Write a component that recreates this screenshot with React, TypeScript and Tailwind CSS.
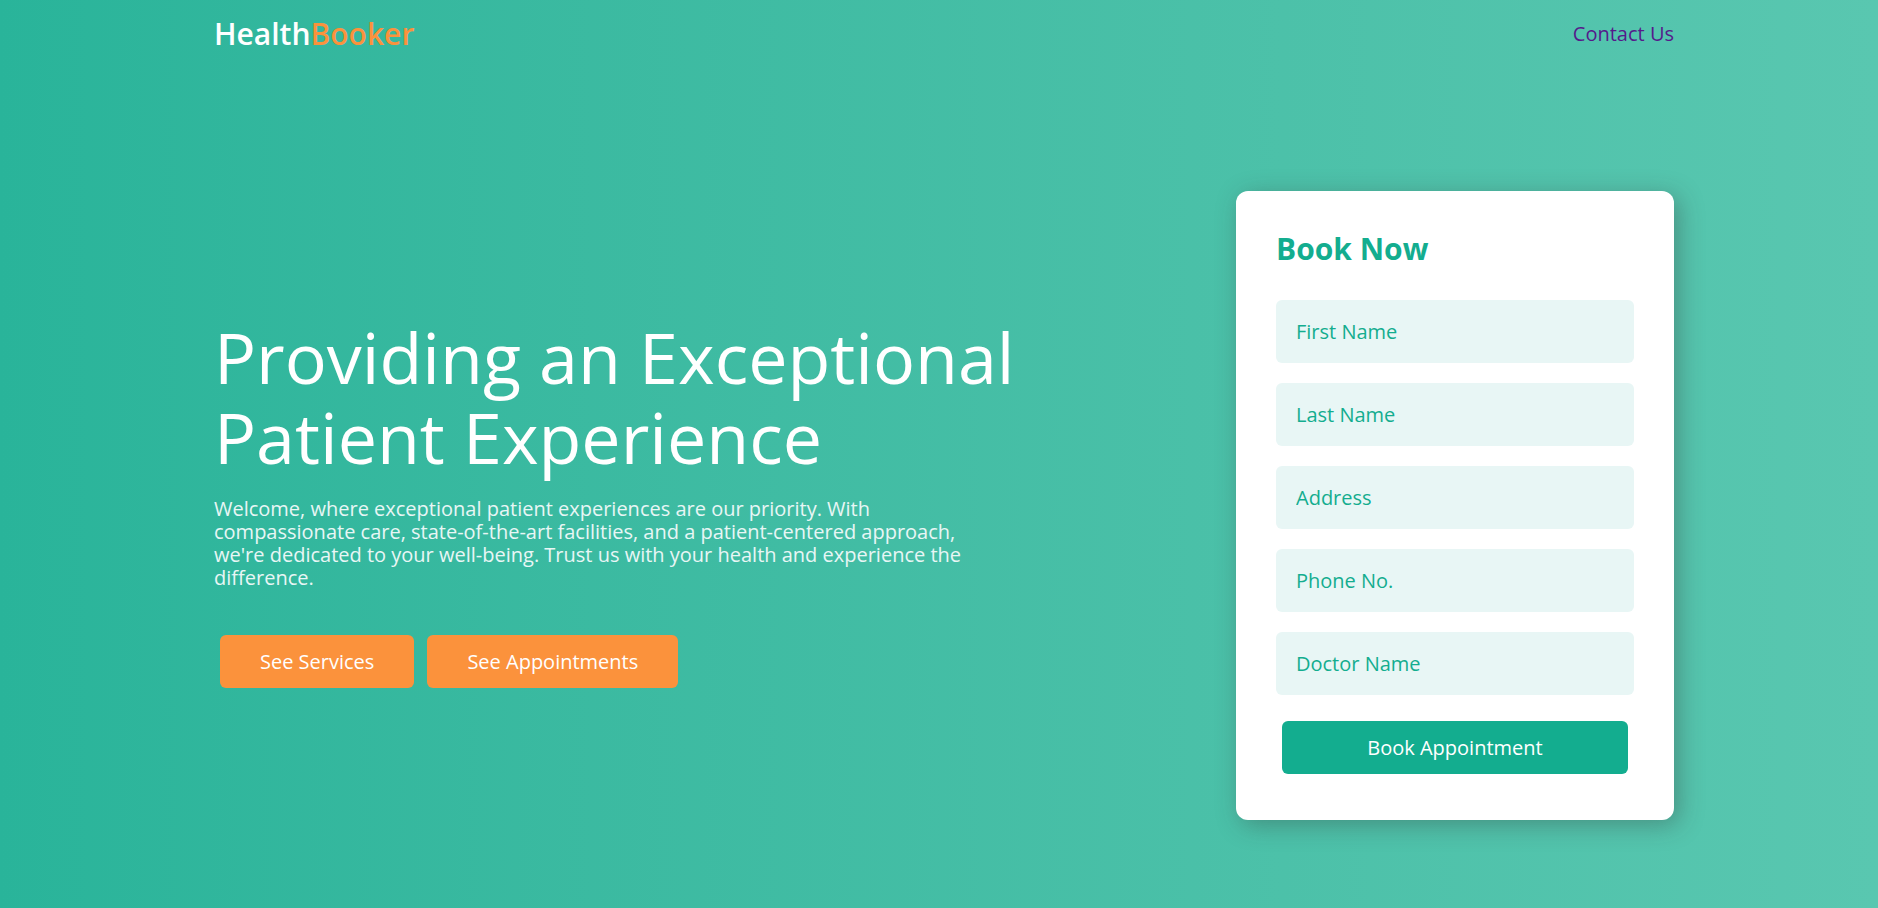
const fields = [
  { id: "first-name", label: "First Name", type: "text" },
  { id: "last-name", label: "Last Name", type: "text" },
  { id: "address", label: "Address", type: "text" },
  { id: "phone", label: "Phone No.", type: "tel" },
  { id: "doctor", label: "Doctor Name", type: "text" },
];

function Header() {
  return (
    <header className="flex items-center justify-between py-4">
      <a href="#home" className="text-[30px] leading-[35px] font-semibold text-white">
        Health<span className="text-[#fb923c]">Booker</span>
      </a>
      <nav>
        <a href="#contact" className="block text-xl leading-[23px] text-[#551a8b]">
          Contact Us
        </a>
      </nav>
    </header>
  );
}

function Hero() {
  return (
    <section className="w-3/5">
      <h1 className="mb-5 text-[70px] leading-[80px] text-white">
        Providing an Exceptional Patient Experience
      </h1>
      <p className="max-w-[770px] text-xl leading-[23px] text-[#e8f6f5]">
        Welcome, where exceptional patient experiences are our priority. With compassionate care,
        state-of-the-art facilities, and a patient-centered approach, we&apos;re dedicated to your
        well-being. Trust us with your health and experience the difference.
      </p>
      <div className="mt-10 flex gap-[13px] p-1.5">
        <button
          type="button"
          className="rounded-md bg-[#fb923c] px-10 py-[15px] text-xl leading-[23px] text-white"
        >
          See Services
        </button>
        <button
          type="button"
          className="rounded-md bg-[#fb923c] px-10 py-[15px] text-xl leading-[23px] text-white"
        >
          See Appointments
        </button>
      </div>
    </section>
  );
}

function BookingForm() {
  return (
    <form className="w-[30%] rounded-xl bg-white p-10 shadow-[5px_5px_25px_rgba(48,48,48,0.35)]">
      <h2 className="mb-[34px] text-[30px] leading-[35px] font-bold text-[#13ad8f]">Book Now</h2>
      <div className="flex flex-col gap-5">
        {fields.map((field) => (
          <input
            key={field.id}
            id={field.id}
            name={field.id}
            type={field.type}
            aria-label={field.label}
            placeholder={field.label}
            className="block h-[63px] w-full rounded-md bg-[#e8f6f5] px-5 text-xl text-[#13ad8f] outline-none placeholder:text-[#13ad8f]"
          />
        ))}
        <div className="p-1.5">
          <button
            type="submit"
            className="w-full rounded-md bg-[#13ad8f] py-[15px] text-xl leading-[23px] text-white"
          >
            Book Appointment
          </button>
        </div>
      </div>
    </form>
  );
}

export default function App() {
  return (
    <div className="min-h-screen bg-linear-to-r from-[#29b49a] to-[#59c7b0] pl-2.5 font-['Open_Sans','Noto_Sans',sans-serif]">
      <div className="mx-auto flex min-h-screen max-w-[1460px] flex-col">
        <Header />
        <main className="flex flex-1 items-center justify-between pt-9">
          <Hero />
          <BookingForm />
        </main>
      </div>
    </div>
  );
}
